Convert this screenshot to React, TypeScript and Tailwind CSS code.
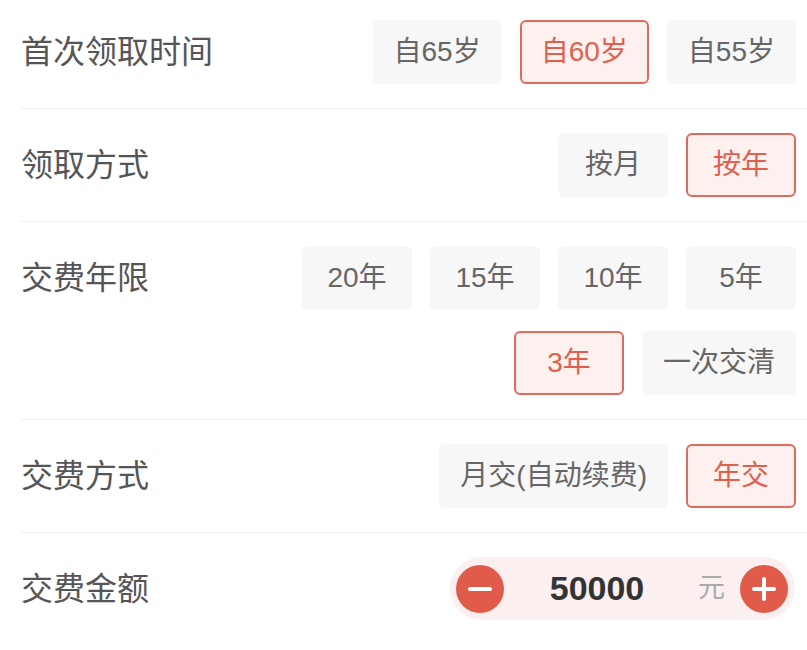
import { useState } from 'react'

const rows: { title: string; options: string[]; selected: string; narrow?: boolean }[] = [
  { title: '首次领取时间', options: ['自65岁', '自60岁', '自55岁'], selected: '自60岁' },
  { title: '领取方式', options: ['按月', '按年'], selected: '按年' },
  { title: '交费年限', options: ['20年', '15年', '10年', '5年', '3年', '一次交清'], selected: '3年', narrow: true },
  { title: '交费方式', options: ['月交(自动续费)', '年交'], selected: '年交' },
]

function Chip({ label, active, onClick }: { label: string; active: boolean; onClick: () => void }) {
  return (
    <button
      onClick={onClick}
      className={
        active
          ? 'flex h-16 min-w-[110px] items-center justify-center rounded-md border-2 border-[#e06a5b] bg-[#fdf1ef] px-[19px] text-[28px] text-[#e0604e]'
          : 'flex h-16 min-w-[110px] items-center justify-center rounded-md border-2 border-[#f7f7f7] bg-[#f7f7f7] px-[19px] text-[28px] text-[#666666]'
      }
    >
      {label}
    </button>
  )
}

function Row({ title, options, initial, first, narrow }: { title: string; options: string[]; initial: string; first?: boolean; narrow?: boolean }) {
  const [value, setValue] = useState(initial)
  return (
    <div className={`flex items-start justify-between border-b border-[#f0f0f0] pb-6 pr-[11px] ${first ? 'pt-5' : 'pt-6'}`}>
      <div className="flex h-16 shrink-0 items-center text-[32px] text-[#555555]">{title}</div>
      <div className={`flex flex-wrap justify-end gap-x-[18px] gap-y-[21px] ${narrow ? 'w-[494px]' : 'flex-1'}`}>
        {options.map((o) => (
          <Chip key={o} label={o} active={o === value} onClick={() => setValue(o)} />
        ))}
      </div>
    </div>
  )
}

export default function App() {
  const [amount, setAmount] = useState(50000)
  return (
    <div
      className="min-h-[650px] w-[807px] bg-white pl-[21px]"
      style={{ fontFamily: '"Liberation Sans", "Noto Sans CJK SC", sans-serif' }}
    >
      {rows.map((r, i) => (
        <Row key={r.title} title={r.title} options={r.options} initial={r.selected} first={i === 0} narrow={r.narrow} />
      ))}

      <div className="flex items-center pr-3 pt-6">
        <div className="flex-1 text-[32px] text-[#555555]">交费金额</div>
        <div className="flex h-[63px] w-[345px] items-center rounded-full bg-[#fbf0ef] pl-[6px] pr-[7px]">
          <button
            onClick={() => setAmount((a) => Math.max(0, a - 1000))}
            className="flex h-12 w-12 items-center justify-center rounded-full bg-[#e05b49]"
          >
            <span className="block h-1 w-[24px] rounded-full bg-white" />
          </button>
          <span className="w-[186px] text-center text-[34px] font-bold text-[#333333]">{amount}</span>
          <span className="ml-2 text-[27px] text-[#aaaaaa]">元</span>
          <button
            onClick={() => setAmount((a) => a + 1000)}
            className="relative ml-[15px] flex h-12 w-12 items-center justify-center rounded-full bg-[#e05b49]"
          >
            <span className="absolute h-1 w-[24px] rounded-full bg-white" />
            <span className="absolute h-[24px] w-1 rounded-full bg-white" />
          </button>
        </div>
      </div>
    </div>
  )
}
